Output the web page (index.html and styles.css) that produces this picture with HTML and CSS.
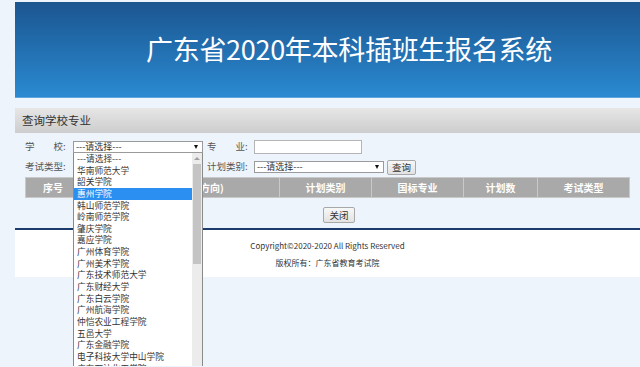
FILE: index.html
```html
<!DOCTYPE html>
<html lang="zh-CN">
<head>
    <meta charset="UTF-8">
    <meta name="viewport" content="width=device-width, initial-scale=1.0">
    <title>广东省2020年本科插班生报名系统</title>
    <link rel="stylesheet" href="styles.css">
</head>
<body>
    <div class="page">
        <div class="header">
            <h1>广东省2020年本科插班生报名系统</h1>
        </div>

        <div class="panel">
            <div class="panel-title">查询学校专业</div>

            <div class="form">
                <div class="row">
                    <span class="label">学　　校:</span>
                    <div class="select-wrap">
                        <div class="select">---请选择---</div>
                        <div class="dropdown">
                            <ul class="options">
                                <li>---请选择---</li>
                                <li>华南师范大学</li>
                                <li>韶关学院</li>
                                <li class="active">惠州学院</li>
                                <li>韩山师范学院</li>
                                <li>岭南师范学院</li>
                                <li>肇庆学院</li>
                                <li>嘉应学院</li>
                                <li>广州体育学院</li>
                                <li>广州美术学院</li>
                                <li>广东技术师范大学</li>
                                <li>广东财经大学</li>
                                <li>广东白云学院</li>
                                <li>广州航海学院</li>
                                <li>仲恺农业工程学院</li>
                                <li>五邑大学</li>
                                <li>广东金融学院</li>
                                <li>电子科技大学中山学院</li>
                                <li>广东石油化工学院</li>
                            </ul>
                            <div class="scrollbar">
                                <span class="arrow-up"></span>
                                <span class="thumb"></span>
                            </div>
                        </div>
                    </div>
                    <span class="label label-2">专　　业:</span>
                    <input type="text" class="text-input">
                </div>

                <div class="row">
                    <span class="label">考试类型:</span>
                    <div class="select-wrap">
                        <div class="select">---请选择---</div>
                    </div>
                    <span class="label label-2">计划类别:</span>
                    <div class="select-wrap">
                        <div class="select">---请选择---</div>
                    </div>
                    <button type="button" class="btn btn-query">查询</button>
                </div>
            </div>

            <table class="result-table">
                <thead>
                    <tr>
                        <th class="col-no">序号</th>
                        <th class="col-major">专业名称(专业方向)</th>
                        <th class="col-wide">计划类别</th>
                        <th class="col-wide">国标专业</th>
                        <th class="col-num">计划数</th>
                        <th class="col-wide">考试类型</th>
                    </tr>
                </thead>
            </table>

            <div class="actions">
                <button type="button" class="btn btn-close">关闭</button>
            </div>
        </div>

        <div class="footer">
            <p>Copyright©2020-2020 All Rights Reserved</p>
            <p>版权所有：广东省教育考试院</p>
        </div>
    </div>
</body>
</html>
```

FILE: styles.css
```css
* {
    margin: 0;
    padding: 0;
    box-sizing: border-box;
}

html, body {
    height: 100%;
}

body {
    font-family: "Noto Sans CJK SC", "Noto Sans", sans-serif;
    background-color: #edf4fb;
    color: #444;
    font-size: 9.5px;
    line-height: 1.2;
}

.page {
    margin-left: 15px;
    width: 625px;
    min-height: 100%;
    padding-top: 2px;
}

.header {
    height: 96px;
    background: linear-gradient(#1b5590, #2a8ad1);
    border-bottom: 1px solid #5ea6dd;
    display: flex;
    align-items: center;
    padding-left: 131px;
}

.header h1 {
    color: #fff;
    font-size: 27px;
    font-weight: normal;
    letter-spacing: -0.3px;
}

.panel {
    margin-top: 10px;
}

.panel-title {
    height: 25px;
    line-height: 25px;
    padding-left: 7px;
    font-size: 11.5px;
    color: #333;
    background: linear-gradient(#e6e6e6, #cdcdcd);
}

.form {
    padding: 4px 0 0 10px;
}

.row {
    display: flex;
    align-items: center;
    height: 20px;
}

.label {
    width: 48px;
    color: #555;
    white-space: nowrap;
}

.label-2 {
    margin-left: 4px;
    width: 47px;
}

.select-wrap {
    position: relative;
    width: 130px;
}

.select {
    height: 12px;
    line-height: 10px;
    border: 1px solid #9a9a9a;
    background: #fff;
    padding-left: 2px;
    color: #333;
    font-size: 9px;
    position: relative;
}

.select::after {
    content: "";
    position: absolute;
    right: 4px;
    top: 3px;
    border-left: 2.5px solid transparent;
    border-right: 2.5px solid transparent;
    border-top: 4px solid #111;
}

.text-input {
    width: 108px;
    height: 14px;
    border: 1px solid #b5b5b5;
    background: #fff;
}

.btn {
    font-family: inherit;
    font-size: 9.5px;
    color: #333;
    background: linear-gradient(#f7f7f7, #e2e2e2);
    border: 1px solid #a8a8a8;
    border-radius: 2px;
    padding: 0 4px;
    height: 15px;
    line-height: 13px;
}

.btn-query {
    margin-left: 3px;
}

.dropdown {
    position: absolute;
    top: 12px;
    left: 0;
    width: 130px;
    height: 213px;
    overflow: hidden;
    background: #fff;
    border: 1px solid #8a8a8a;
    border-top: none;
    border-bottom: none;
    display: flex;
    z-index: 5;
}

.options {
    list-style: none;
    flex: 1;
}

.options li {
    height: 11.65px;
    line-height: 11.65px;
    padding-left: 3px;
    font-size: 8.7px;
    color: #333;
    white-space: nowrap;
}

.options li.active {
    background: #2a8ff0;
    color: #fff;
}

.scrollbar {
    width: 10px;
    background: #ececec;
    position: relative;
}

.arrow-up {
    position: absolute;
    top: 4px;
    left: 2px;
    border-left: 3px solid transparent;
    border-right: 3px solid transparent;
    border-bottom: 3px solid #a0a0a0;
}

.thumb {
    position: absolute;
    top: 11px;
    left: 1px;
    width: 8px;
    height: 100px;
    background: #c4c4c4;
}

.result-table {
    margin-left: 10px;
    border-collapse: collapse;
    width: 604px;
    table-layout: fixed;
}

.result-table th {
    height: 20px;
    background: #a9a9a9;
    color: #fff;
    font-weight: bold;
    font-size: 10px;
    border: 1px solid #c9c9c9;
}

.col-no { width: 55px; }
.col-major { width: 199px; }
.col-wide { width: 92px; }
.col-num { width: 74px; }

.actions {
    display: flex;
    justify-content: center;
    padding: 9px 0 5px 23px;
}

.btn-close {
    height: 16px;
    padding: 0 5px;
}

.footer {
    border-top: 2px solid #1c3c6e;
    background: #fff;
    height: 49px;
    padding-top: 7px;
    text-align: center;
    color: #333;
    font-size: 8px;
}

.footer p {
    line-height: 17px;
}
```
